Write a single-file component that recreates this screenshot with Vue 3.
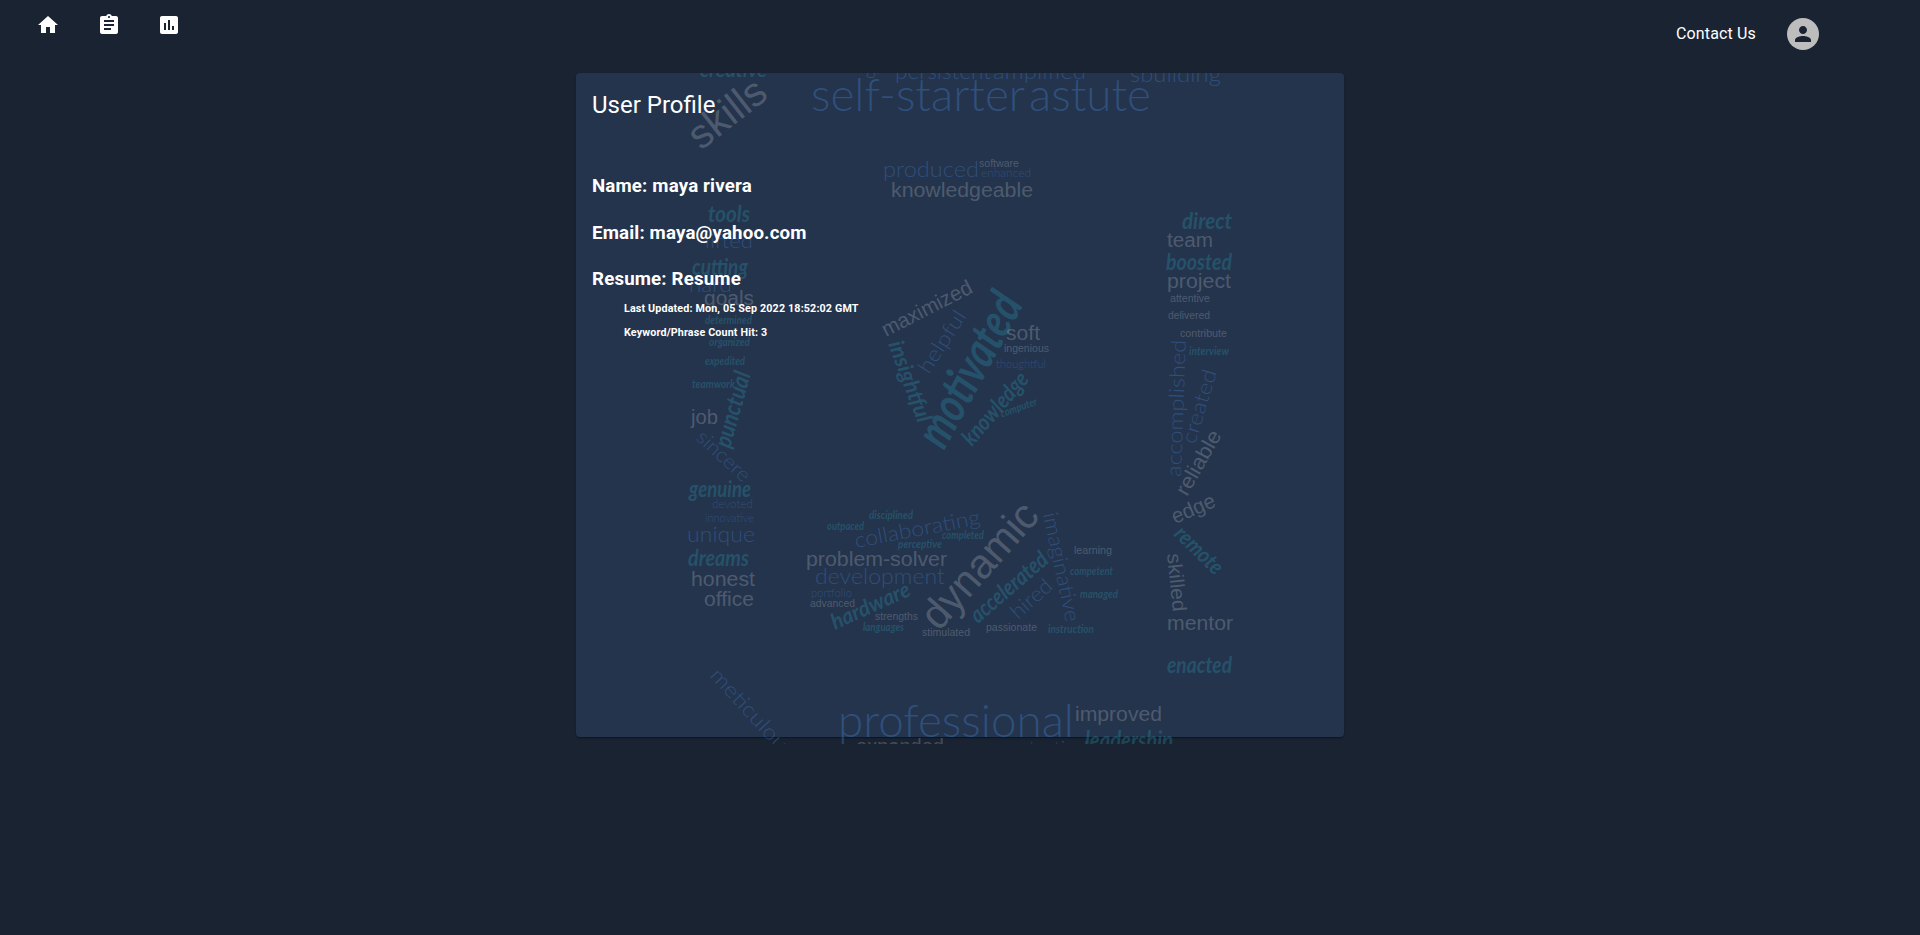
<script setup>
// [text, kind, font size, baseline start x, y, baseline end x, y]
const source = [
  ['creative', 's', 19, 700, 77, 767, 77],
  ['skills', 'g', 41, 701, 151, 770, 97],
  ['gr', 'b', 21, 866, 74, 883, 74],
  ['persistent', 'b', 22, 895, 78.5, 991, 78.5],
  ['amplified', 'b', 22, 993, 78.5, 1086, 78.5],
  ['sbuilding', 'b', 22, 1130, 81.5, 1221, 81.5],
  ['self-starter', 'b', 45, 811, 110.5, 1025, 110.5],
  ['astute', 'b', 45, 1029, 110.5, 1151, 110.5],
  ['produced', 'b', 21, 883, 176.5, 979, 176.5],
  ['software', 'g', 11, 979, 167, 1019, 167],
  ['enhanced', 'b', 11, 981, 177, 1031, 177],
  ['knowledgeable', 'g', 20, 891, 197, 1033, 197],
  ['tools', 's', 22, 708, 222, 750, 222],
  ['lifted', 'b', 20, 705, 247.5, 753, 247.5],
  ['cutting', 's', 22, 692, 275, 748, 275],
  ['hard', 'b', 20, 689, 292, 732, 292],
  ['goals', 'g', 20, 704, 305, 754, 305],
  ['determined', 's', 11, 705, 323.5, 752, 323.5],
  ['organized', 's', 11, 709, 346, 750, 346],
  ['expedited', 's', 11, 705, 365, 745, 365],
  ['teamwork', 's', 11, 692, 388, 735, 388],
  ['punctual', 's', 24, 730, 449, 751, 374],
  ['job', 'g', 20, 691, 424, 718, 424],
  ['sincere', 'b', 20, 695, 439, 743, 483],
  ['genuine', 's', 22, 689, 497, 751, 497],
  ['devoted', 'b', 11, 712, 507.7, 753, 507.7],
  ['innovative', 'b', 11, 705, 522, 754, 522],
  ['unique', 'b', 21, 687, 542, 755, 542],
  ['dreams', 's', 22, 688, 566, 749, 566],
  ['honest', 'g', 20, 691, 586.3, 755, 586.3],
  ['office', 'g', 20, 704, 606, 754, 606],
  ['maximized', 'g', 21, 886, 337, 974, 292],
  ['helpful', 'b', 21, 929, 375, 967, 316],
  ['motivated', 's', 49, 944, 451, 1024, 304],
  ['insightful', 's', 22, 888, 344, 918, 424],
  ['soft', 'g', 21, 1006, 339.5, 1040, 339.5],
  ['ingenious', 'g', 11, 1004, 352.3, 1049, 352.3],
  ['thoughtful', 'b', 11, 996, 367.7, 1046, 367.7],
  ['knowledge', 's', 23, 972, 447, 1030, 380],
  ['computer', 's', 11, 1002, 417.5, 1038, 404.5],
  ['direct', 's', 22, 1182, 228.7, 1232, 228.7],
  ['team', 'g', 20, 1167, 247.3, 1213, 247.3],
  ['boosted', 's', 22, 1166, 269.7, 1232, 269.7],
  ['project', 'g', 20, 1167, 288, 1231, 288],
  ['attentive', 'g', 11, 1170, 302, 1210, 302],
  ['delivered', 'g', 11, 1168, 319, 1210, 319],
  ['contribute', 'g', 11, 1180, 337.3, 1227, 337.3],
  ['interview', 's', 11, 1189, 355, 1229, 355],
  ['accomplished', 'b', 21, 1181, 477, 1186, 340],
  ['created', 'b', 21, 1195, 445, 1217, 372],
  ['reliable', 'g', 21, 1187, 497, 1222, 435],
  ['edge', 'g', 21, 1175, 524, 1217, 506],
  ['remote', 's', 22, 1173, 535, 1215, 576],
  ['skilled', 'g', 20, 1167, 554, 1173, 612],
  ['mentor', 'g', 20, 1167, 630, 1233, 630],
  ['enacted', 's', 22, 1167, 673, 1232, 673],
  ['disciplined', 's', 11, 869, 518.7, 913, 518.7],
  ['outpaced', 's', 11, 827, 530, 864, 530],
  ['collaborating', 'b', 21, 856, 548, 981, 524],
  ['completed', 's', 11, 942, 539.3, 984, 539.3],
  ['perceptive', 's', 11, 898, 548.3, 942, 548.3],
  ['problem-solver', 'g', 20.5, 806, 565.5, 947, 565.5],
  ['development', 'b', 21, 815, 584.3, 945, 584.3],
  ['portfolio', 'b', 11, 811, 597.3, 852, 597.3],
  ['advanced', 'g', 11, 810, 607, 855, 607],
  ['hardware', 's', 22, 835, 630, 912, 595],
  ['strengths', 'g', 11, 875, 620.3, 918, 620.3],
  ['languages', 's', 11, 863, 631.3, 904, 631.3],
  ['stimulated', 'g', 11, 922, 636.3, 970, 636.3],
  ['dynamic', 'g', 42, 939, 632, 1041, 517],
  ['accelerated', 's', 23, 978, 624, 1050, 562],
  ['hired', 'b', 21, 1018, 620, 1054, 588],
  ['imaginative', 'b', 21, 1043, 514, 1066, 623],
  ['passionate', 'g', 11, 986, 631, 1037, 631],
  ['learning', 'g', 11, 1074, 554.3, 1112, 554.3],
  ['competent', 's', 11, 1070, 575.3, 1113, 575.3],
  ['managed', 's', 11, 1080, 598.3, 1118, 598.3],
  ['instruction', 's', 11, 1048, 632.7, 1094, 632.7],
  ['meticulous', 'b', 21, 709, 676, 786, 760],
  ['professional', 'b', 45, 838, 737, 1074, 737],
  ['improved', 'g', 20, 1075, 721, 1162, 721],
  ['expanded', 'g', 20, 856, 753, 944, 753],
  ['tactical', 'b', 20, 1029, 755, 1088, 755],
  ['leadership', 's', 24, 1085, 749, 1173, 749]
]

const words = source.map(([text, kind, size, x1, y1, x2, y2]) => ({
  text,
  kind,
  size,
  length: Math.hypot(x2 - x1, y2 - y1),
  transform: `translate(${x1 - 576} ${y1 - 73}) rotate(${(Math.atan2(y2 - y1, x2 - x1) * 180) / Math.PI})`
}))
</script>

<template>
  <div class="page">
    <header class="bar">
      <nav class="links">
        <svg viewBox="0 0 24 24"><path d="M10 20v-6h4v6h5v-8h3L12 3 2 12h3v8z" /></svg>
        <svg viewBox="0 0 24 24"><path d="M19 3h-4.18C14.4 1.84 13.3 1 12 1c-1.3 0-2.4.84-2.82 2H5c-1.1 0-2 .9-2 2v14c0 1.1.9 2 2 2h14c1.1 0 2-.9 2-2V5c0-1.1-.9-2-2-2zm-7 0c.55 0 1 .45 1 1s-.45 1-1 1-1-.45-1-1 .45-1 1-1zm2 14H7v-2h7v2zm3-4H7v-2h10v2zm0-4H7V7h10v2z" /></svg>
        <svg viewBox="0 0 24 24"><path d="M19 3H5c-1.1 0-2 .9-2 2v14c0 1.1.9 2 2 2h14c1.1 0 2-.9 2-2V5c0-1.1-.9-2-2-2zM9 17H7v-7h2v7zm4 0h-2V7h2v10zm4 0h-2v-4h2v4z" /></svg>
      </nav>
      <div class="account">
        <span class="contact">Contact Us</span>
        <span class="avatar">
          <svg viewBox="0 0 24 24"><path d="M12 12c2.21 0 4-1.79 4-4s-1.79-4-4-4-4 1.79-4 4 1.79 4 4 4zm0 2c-2.67 0-8 1.34-8 4v2h16v-2c0-2.66-5.33-4-8-4z" /></svg>
        </span>
      </div>
    </header>

    <main class="card">
      <svg class="cloud" viewBox="0 0 768 671" width="768" height="671">
        <text
          v-for="w in words"
          :key="w.text"
          :class="w.kind"
          :font-size="w.size"
          :textLength="w.length"
          lengthAdjust="spacingAndGlyphs"
          :transform="w.transform"
        >{{ w.text }}</text>
      </svg>
      <div class="content">
        <h1>User Profile</h1>
        <h2>Name: maya rivera</h2>
        <h2>Email: maya@yahoo.com</h2>
        <h2>Resume: Resume</h2>
        <p>Last Updated: Mon, 05 Sep 2022 18:52:02 GMT</p>
        <p>Keyword/Phrase Count Hit: 3</p>
      </div>
    </main>
  </div>
</template>

<style>
body {
  margin: 0;
  background: #1a2332;
}
</style>

<style scoped>
.page {
  height: 935px;
  overflow: hidden;
  background: #1a2332;
  color: #fff;
  font-family: Roboto, sans-serif;
}
.bar {
  height: 73px;
  display: flex;
  justify-content: space-between;
  align-items: flex-start;
  box-sizing: border-box;
  padding: 13px 101px 0 36px;
}
.links {
  display: flex;
  gap: 36.5px;
}
.bar svg {
  display: block;
  width: 24px;
  height: 24px;
  fill: #fff;
}
.account {
  display: flex;
  align-items: center;
  gap: 31px;
  margin-top: 5px;
}
.contact {
  font-size: 16px;
  line-height: 24px;
  letter-spacing: 0.15px;
}
.avatar {
  width: 32px;
  height: 32px;
  border-radius: 50%;
  background: #bdbdbd;
  display: grid;
  place-items: center;
}
.bar .avatar svg {
  fill: #1a2332;
}
.card {
  position: relative;
  width: 768px;
  height: 664px;
  margin: 0 auto;
  border-radius: 4px;
  background: #24344d;
  box-shadow: 0 2px 1px -1px rgba(0, 0, 0, 0.2), 0 1px 1px rgba(0, 0, 0, 0.14), 0 1px 3px rgba(0, 0, 0, 0.12);
}
.cloud {
  position: absolute;
  left: 0;
  top: 0;
  overflow: hidden;
}
.g {
  font-family: "Liberation Sans", sans-serif;
  fill: rgba(255, 255, 255, 0.2);
}
.b {
  font-family: Lato, sans-serif;
  font-weight: 300;
  fill: rgba(70, 135, 215, 0.34);
}
.s {
  font-family: Lato, cursive;
  font-style: italic;
  font-weight: 700;
  fill: rgba(40, 150, 170, 0.33);
}
.content {
  position: relative;
  padding: 16px;
}
h1 {
  margin: 0 0 53px;
  font-size: 24px;
  line-height: 32px;
  font-weight: 400;
}
h2 {
  margin: 0 0 22.5px;
  font-size: 18.72px;
  line-height: 24px;
  font-weight: 700;
  letter-spacing: 0.15px;
}
p {
  margin: 0 0 12px 32px;
  font-size: 10.72px;
  line-height: 12px;
  font-weight: 700;
  letter-spacing: 0.15px;
}
h2 + p {
  margin-top: -11px;
}
</style>
